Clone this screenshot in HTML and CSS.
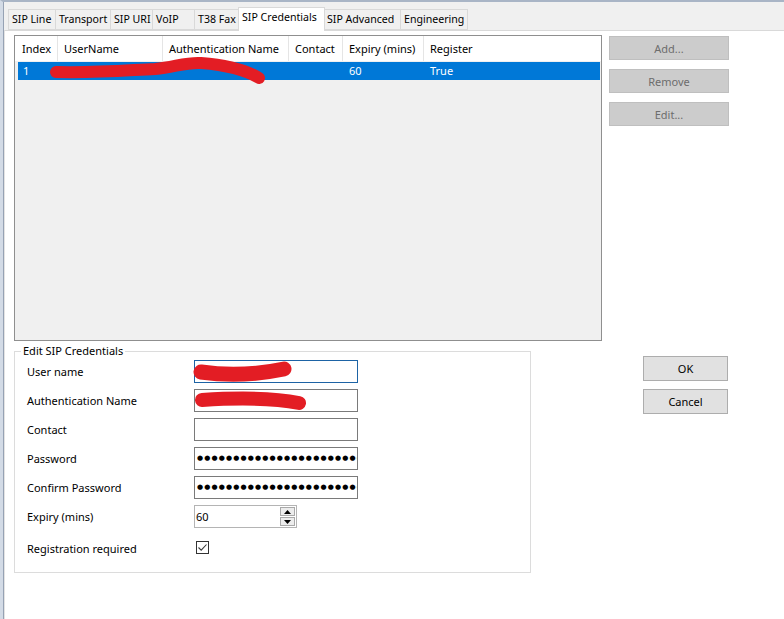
FILE: index.html
```html
<!DOCTYPE html>
<html lang="en">
<head>
<meta charset="utf-8">
<title>SIP Credentials</title>
<link rel="stylesheet" href="styles.css">
</head>
<body>
<div class="window">
  <div class="tabs">
    <div class="tab">SIP Line</div>
    <div class="tab">Transport</div>
    <div class="tab">SIP URI</div>
    <div class="tab">VoIP</div>
    <div class="tab">T38 Fax</div>
    <div class="tab tab-active">SIP Credentials</div>
    <div class="tab">SIP Advanced</div>
    <div class="tab">Engineering</div>
  </div>
  <div class="page">
    <div class="top-row">
      <div class="list">
        <div class="list-head">
          <div class="hcell">Index</div>
          <div class="hcell">UserName</div>
          <div class="hcell">Authentication Name</div>
          <div class="hcell">Contact</div>
          <div class="hcell">Expiry (mins)</div>
          <div class="hcell hcell-last">Register</div>
        </div>
        <div class="list-row">
          <div class="cell">1</div>
          <div class="cell"></div>
          <div class="cell"></div>
          <div class="cell"></div>
          <div class="cell">60</div>
          <div class="cell">True</div>
        </div>
      </div>
      <div class="side-buttons">
        <button class="btn btn-disabled">Add...</button>
        <button class="btn btn-disabled">Remove</button>
        <button class="btn btn-disabled">Edit...</button>
      </div>
    </div>
    <div class="bottom-row">
      <fieldset class="group">
        <legend>Edit SIP Credentials</legend>
        <div class="form">
          <label class="lbl">User name</label>
          <input class="field field-focus" type="text" value="">
          <label class="lbl">Authentication Name</label>
          <input class="field" type="text" value="">
          <label class="lbl">Contact</label>
          <input class="field" type="text" value="">
          <label class="lbl">Password</label>
          <div class="field dots">●●●●●●●●●●●●●●●●●●●●●●●</div>
          <label class="lbl">Confirm Password</label>
          <div class="field dots">●●●●●●●●●●●●●●●●●●●●●●●</div>
          <label class="lbl">Expiry (mins)</label>
          <div class="spin">
            <span class="spin-value">60</span>
            <span class="spin-btns">
              <span class="spin-btn"><svg width="7" height="4" viewBox="0 0 7 4"><path d="M0 4 L3.5 0 L7 4 Z" fill="#000"/></svg></span>
              <span class="spin-btn"><svg width="7" height="4" viewBox="0 0 7 4"><path d="M0 0 L3.5 4 L7 0 Z" fill="#000"/></svg></span>
            </span>
          </div>
          <label class="lbl lbl-check">Registration required</label>
          <div class="check-wrap">
            <span class="checkbox"><svg width="11" height="11" viewBox="0 0 11 11"><path d="M1.5 5.5 L4.2 8.2 L9.5 2.5" fill="none" stroke="#3a3a3a" stroke-width="1.1"/></svg></span>
          </div>
        </div>
      </fieldset>
      <div class="dlg-buttons">
        <button class="btn btn-normal">OK</button>
        <button class="btn btn-normal">Cancel</button>
      </div>
    </div>
  </div>
  <svg class="redact" width="784" height="619" viewBox="0 0 784 619">
    <path d="M56 72 C100 73 130 70 155 69 C175 67 186 62 201 63 C226 65 246 70 259 78" fill="none" stroke="#e31d24" stroke-width="12" stroke-linecap="round"/>
    <path d="M201 372 C228 376 255 375 284 369" fill="none" stroke="#e31d24" stroke-width="15" stroke-linecap="round"/>
    <path d="M202 400 C234 398 268 397 299 403" fill="none" stroke="#e31d24" stroke-width="14" stroke-linecap="round"/>
  </svg>
</div>
</body>
</html>
```
FILE: styles.css
```css
* { box-sizing: border-box; }
html, body { margin: 0; padding: 0; }
body {
  width: 784px;
  height: 619px;
  overflow: hidden;
  font-family: "Noto Sans", "DejaVu Sans", sans-serif;
  font-size: 11px;
  color: #000;
}
.window {
  position: relative;
  height: 619px;
  background: #f0f0f0;
  border-top: 2px solid #a9b5c6;
  border-left: 3px solid #d3dbe6;
  box-shadow: inset 1px 0 #96a2b4;
  display: flex;
  flex-direction: column;
}
.tabs {
  display: flex;
  align-items: flex-end;
  padding: 7px 0 0 5px;
  height: 28px;
  position: relative;
  z-index: 2;
}
.tab {
  height: 21px;
  line-height: 19px;
  padding-left: 3px;
  font-size: 10.6px;
  background: #f0f0f0;
  border: 1px solid #d9d9d9;
  border-left: none;
  white-space: nowrap;
  overflow: hidden;
}
.tab:first-child { border-left: 1px solid #d9d9d9; }
.tab:nth-child(1) { width: 48px; }
.tab:nth-child(2) { width: 55px; }
.tab:nth-child(3) { width: 42px; }
.tab:nth-child(4) { width: 42px; }
.tab:nth-child(5) { width: 45px; }
.tab:nth-child(7) { width: 77px; }
.tab:nth-child(8) { width: 67px; }
.tab-active {
  width: 87px;
  height: 24px;
  line-height: 19px;
  margin: 0 -1px -1px -2px;
  background: #fff;
  border: 1px solid #d9d9d9;
  border-bottom: none;
  padding-left: 3px;
  position: relative;
  z-index: 3;
}
.page {
  flex: 1;
  background: #fff;
  border-top: 1px solid #d9d9d9;
  border-left: 1px solid #e3e3e3;
  margin-left: 1px;
  padding: 4px 0 0 9px;
}
.top-row {
  display: flex;
  gap: 7px;
}
.list {
  width: 588px;
  height: 306px;
  border: 1px solid #8f8f8f;
  background: #f0f0f0;
}
.list-head {
  display: grid;
  grid-template-columns: 43px 105px 126px 54px 81px 1fr;
  height: 25px;
  background: #fff;
}
.hcell {
  padding-left: 6px;
  line-height: 26px;
  border-right: 1px solid #e5e5e5;
  white-space: nowrap;
  overflow: hidden;
}
.hcell:first-child { padding-left: 7px; }
.hcell-last { border-right: none; }
.list-row {
  display: grid;
  grid-template-columns: 40px 105px 126px 54px 81px 1fr;
  height: 18px;
  margin: 1px 1px 0 3px;
  background: #0078d7;
  color: #fff;
}
.cell {
  padding-left: 6px;
  line-height: 18px;
}
.cell:first-child { padding-left: 5px; }
.side-buttons {
  display: flex;
  flex-direction: column;
  gap: 9px;
  padding-top: 1px;
}
.btn {
  font-family: inherit;
  font-size: 11px;
  padding: 0;
  margin: 0;
  border: 1px solid #adadad;
  background: #e1e1e1;
  color: #000;
}
.btn-disabled {
  width: 120px;
  height: 24px;
  background: #cccccc;
  border-color: #bfbfbf;
  color: #6d6d6d;
}
.bottom-row {
  display: flex;
  margin-top: 2px;
}
.group {
  width: 517px;
  margin: 0;
  padding: 1px 0 15px 6px;
  border: 1px solid #dcdcdc;
  min-inline-size: 0;
}
.group legend {
  padding: 0 2px;
  line-height: 16px;
  font-size: 11px;
}
.form {
  display: grid;
  grid-template-columns: 167px 164px;
  grid-auto-rows: 23px;
  row-gap: 6px;
  padding-left: 6px;
}
.lbl {
  line-height: 23px;
  white-space: nowrap;
}
.lbl-check { margin-top: 3px; }
.field {
  width: 164px;
  height: 23px;
  border: 1px solid #7a7a7a;
  background: #fff;
  font-family: inherit;
  font-size: 11px;
  padding: 0 3px;
  margin: 0;
  outline: none;
}
.field-focus { border-color: #1d63a5; }
.dots {
  overflow: hidden;
  white-space: nowrap;
  font-size: 7px;
  line-height: 21px;
  letter-spacing: 1.15px;
  padding-left: 2px;
  font-family: "DejaVu Sans", sans-serif;
}
.spin {
  width: 103px;
  height: 23px;
  border: 1px solid #b4b4b4;
  display: flex;
  justify-content: space-between;
  align-items: center;
  padding: 0 1px 0 1px;
}
.spin-value { line-height: 21px; }
.spin-btns {
  display: flex;
  flex-direction: column;
  gap: 1px;
}
.spin-btn {
  width: 15px;
  height: 9px;
  border: 1px solid #a9a9a9;
  background: #ececec;
  display: flex;
  align-items: center;
  justify-content: center;
}
.check-wrap {
  margin-top: 3px;
  display: flex;
  align-items: center;
  padding-left: 2px;
}
.checkbox {
  width: 13px;
  height: 13px;
  border: 1px solid #333;
  background: #fff;
  display: flex;
  align-items: center;
  justify-content: center;
}
.dlg-buttons {
  display: flex;
  flex-direction: column;
  gap: 8px;
  margin: 13px 0 0 112px;
}
.btn-normal {
  width: 85px;
  height: 25px;
}
.redact {
  position: absolute;
  top: -2px;
  left: -3px;
  pointer-events: none;
  z-index: 5;
}
```
